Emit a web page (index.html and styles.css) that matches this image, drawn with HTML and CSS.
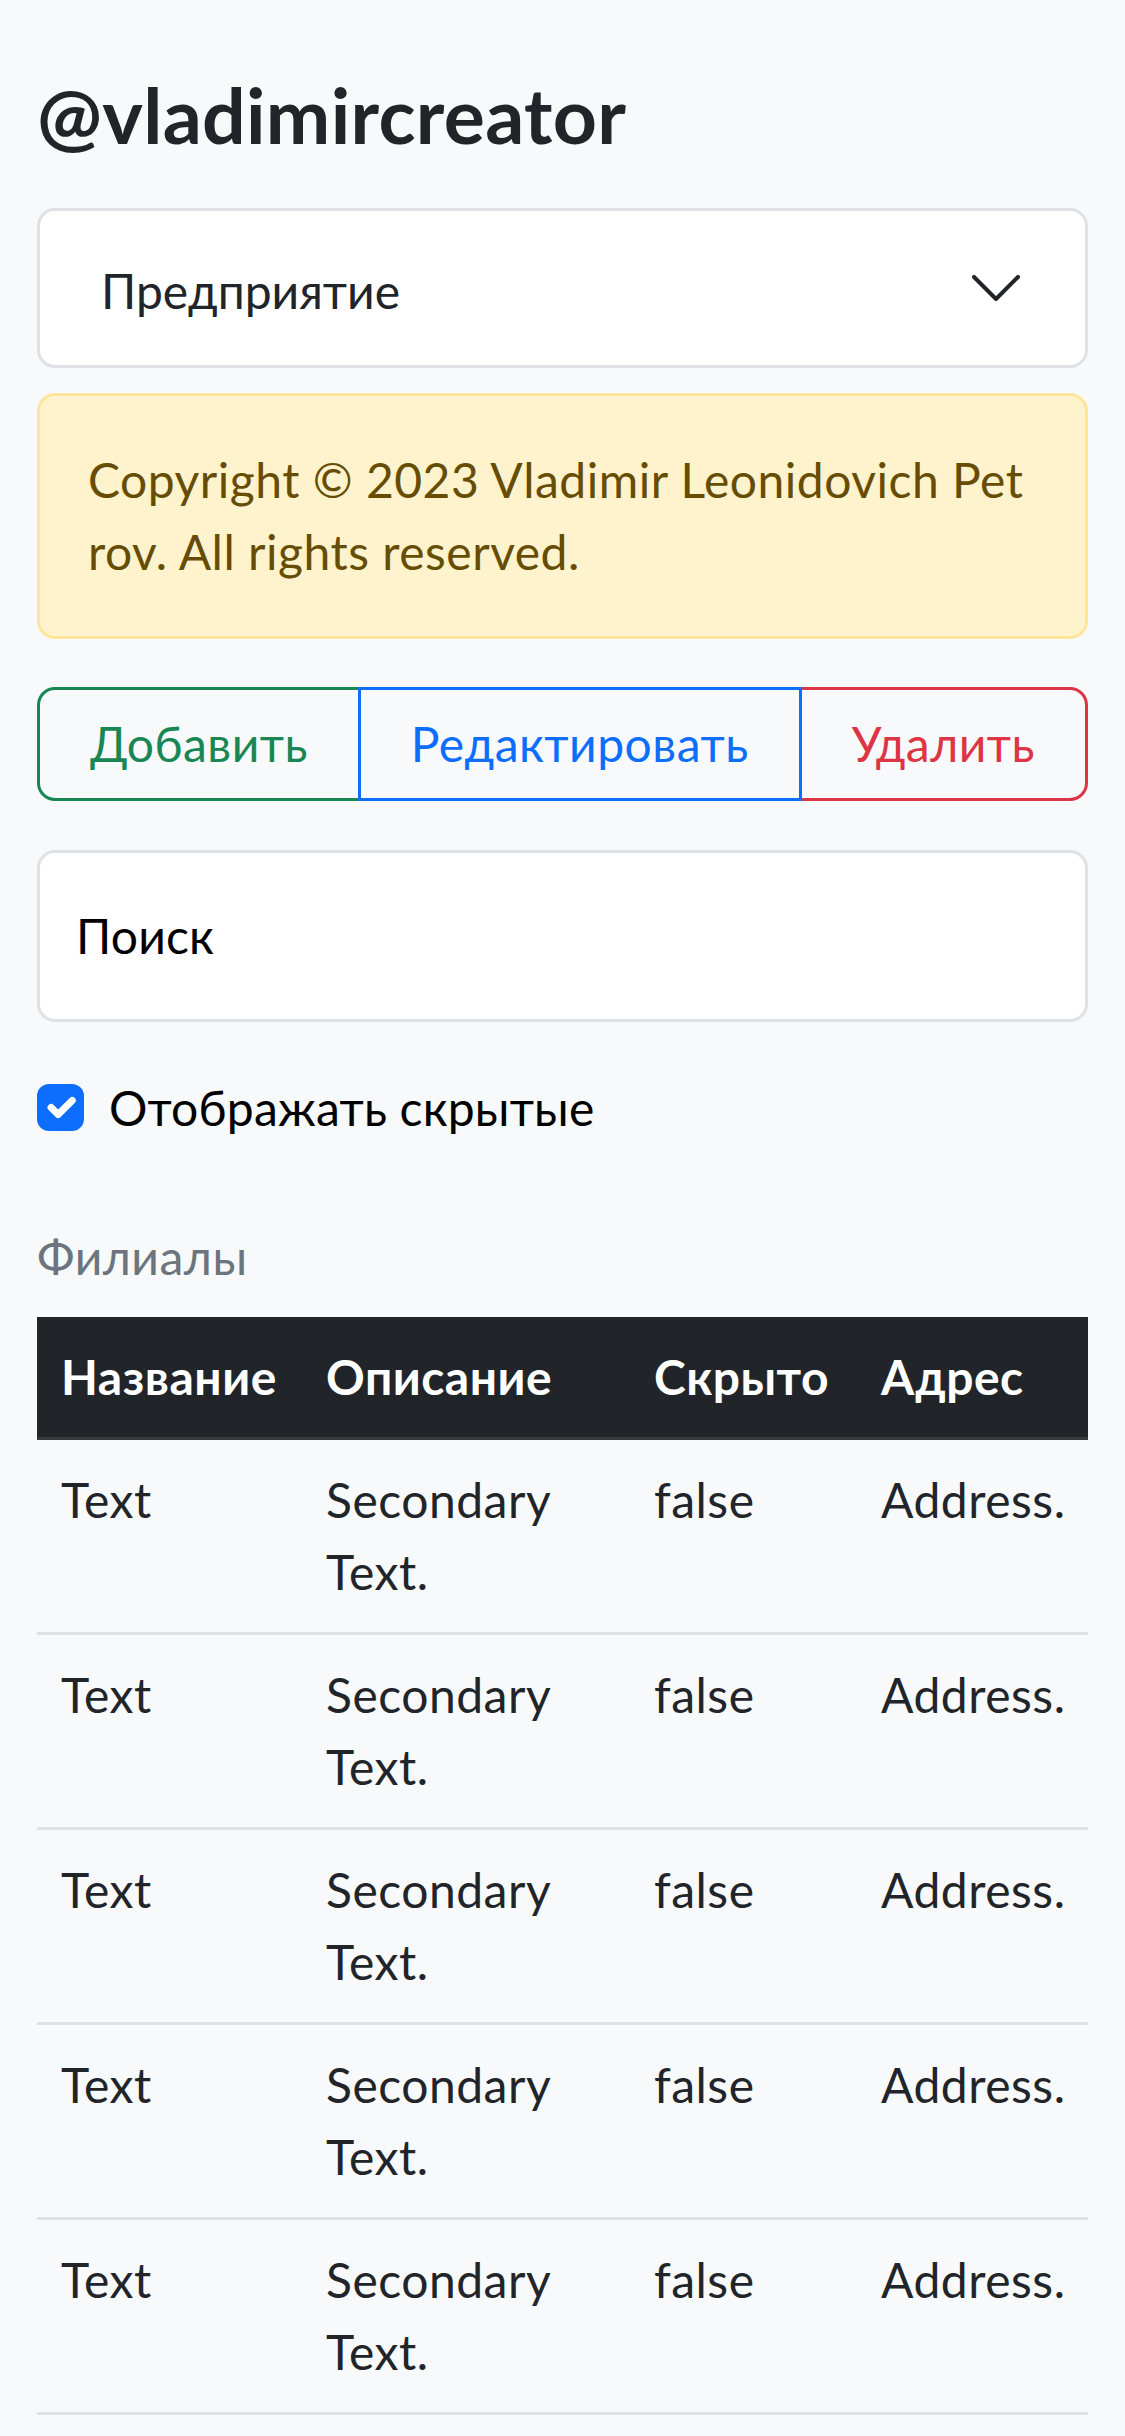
FILE: index.html
```html
<!DOCTYPE html>
<html lang="ru">
<head>
<meta charset="utf-8">
<title>@vladimircreator</title>
<link rel="stylesheet" href="styles.css">
</head>
<body>
<main class="page">
  <h1 class="title">@vladimircreator</h1>

  <div class="select">
    <span class="select-text">Предприятие</span>
    <svg class="chevron" width="48" height="26" viewBox="0 0 48 26"><polyline points="2,2 24,24 46,2" fill="none" stroke="#212529" stroke-width="4" stroke-linecap="round" stroke-linejoin="round"/></svg>
  </div>

  <div class="alert">Copyright © 2023 Vladimir Leonidovich Petrov. All rights reserved.</div>

  <div class="btn-group">
    <button class="btn btn-success">Добавить</button>
    <button class="btn btn-primary">Редактировать</button>
    <button class="btn btn-danger">Удалить</button>
  </div>

  <div class="search"><span class="search-label">Поиск</span></div>

  <div class="check">
    <span class="check-box">
      <svg width="47" height="47" viewBox="0 0 20 20"><path d="m6 10 3 3 6-6" fill="none" stroke="#fff" stroke-width="3" stroke-linecap="round" stroke-linejoin="round"/></svg>
    </span>
    <span class="check-label">Отображать скрытые</span>
  </div>

  <div class="caption">Филиалы</div>
  <table class="table">
    <colgroup>
      <col class="c1"><col class="c2"><col class="c3"><col class="c4">
    </colgroup>
    <thead>
      <tr><th>Название</th><th>Описание</th><th>Скрыто</th><th>Адрес</th></tr>
    </thead>
    <tbody>
      <tr><td>Text</td><td>Secondary Text.</td><td>false</td><td>Address.</td></tr>
      <tr><td>Text</td><td>Secondary Text.</td><td>false</td><td>Address.</td></tr>
      <tr><td>Text</td><td>Secondary Text.</td><td>false</td><td>Address.</td></tr>
      <tr><td>Text</td><td>Secondary Text.</td><td>false</td><td>Address.</td></tr>
      <tr><td>Text</td><td>Secondary Text.</td><td>false</td><td>Address.</td></tr>
    </tbody>
  </table>
</main>
</body>
</html>
```

FILE: styles.css
```css
* { box-sizing: border-box; }

html, body {
  margin: 0;
  background: #f8f9fa;
}

body {
  font-family: Lato, "Noto Sans", sans-serif;
  font-size: 48px;
  line-height: 72px;
  letter-spacing: 0.5px;
  color: #212529;
}

.page {
  padding: 70px 37px 21px;
}

.title {
  margin: 0 0 49px;
  font-size: 77px;
  line-height: 89px;
  letter-spacing: 0.3px;
  font-weight: 700;
  color: #212529;
}

.select {
  height: 160px;
  border: 3px solid #dee2e6;
  border-radius: 18px;
  background: #fff;
  display: flex;
  align-items: center;
  justify-content: space-between;
  padding: 0 65px 0 61px;
  margin-bottom: 25px;
}

.select-text {
  margin-top: 6px;
  letter-spacing: 0;
}

.chevron {
  display: block;
}

.alert {
  border: 3px solid #ffe69c;
  background: #fff3cd;
  color: #664d03;
  border-radius: 18px;
  padding: 48px;
  word-break: break-all;
  margin-bottom: 48px;
}

.btn-group {
  display: flex;
  margin-bottom: 49px;
}

.btn {
  flex: 1 1 auto;
  font-family: inherit;
  font-size: 48px;
  line-height: 72px;
  letter-spacing: 0.5px;
  padding: 18px 48px;
  background: transparent;
  border: 3px solid;
  border-radius: 0;
  white-space: nowrap;
}

.btn + .btn {
  margin-left: -3px;
}

.btn:first-child {
  border-radius: 18px 0 0 18px;
}

.btn:last-child {
  border-radius: 0 18px 18px 0;
}

.btn-success { color: #198754; border-color: #198754; }
.btn-primary { color: #0d6efd; border-color: #0d6efd; position: relative; }
.btn-danger { color: #dc3545; border-color: #dc3545; }

.search {
  height: 172px;
  border: 3px solid #dee2e6;
  border-radius: 18px;
  background: #fff;
  display: flex;
  align-items: center;
  padding-left: 36px;
  color: #000;
  letter-spacing: 0.2px;
  margin-bottom: 50px;
}

.check {
  display: flex;
  align-items: flex-start;
  height: 72px;
  color: #000;
  letter-spacing: 0.2px;
  margin-bottom: 53px;
}

.check-box {
  width: 47px;
  height: 47px;
  margin-top: 12px;
  border-radius: 12px;
  background: #0d6efd;
  display: block;
  flex: none;
}

.check-box svg {
  display: block;
}

.check-label {
  margin-left: 25px;
}

.caption {
  padding: 24px 0;
  color: #6c757d;
}

.table {
  width: 100%;
  border-collapse: collapse;
  table-layout: fixed;
}

.c1 { width: 265px; }
.c2 { width: 328px; }
.c3 { width: 227px; }
.c4 { width: 231px; }

.table th {
  background: #212529;
  color: #fff;
  font-weight: 700;
  text-align: left;
  padding: 24px;
  border-bottom: 3px solid #373b3e;
}

.table td {
  padding: 24px;
  vertical-align: top;
  border-bottom: 3px solid #dee2e6;
}
```
